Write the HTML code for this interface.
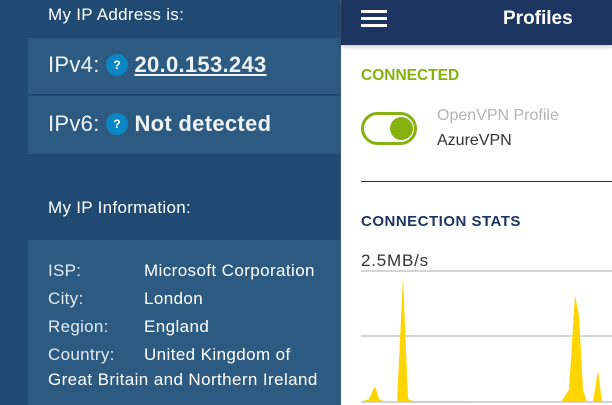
<!DOCTYPE html>
<html><head><style>
body{margin:0;width:612px;height:405px;overflow:hidden;position:relative;background:#214a73;font-family:"Liberation Sans",sans-serif;}
.l{position:absolute;color:#fff;}
.p{position:absolute;left:28px;width:320px;background:#2d5a80;}
.q{display:inline-block;width:22px;height:22px;border-radius:50%;background:#0a86c4;color:#fff;font-size:12px;text-align:center;line-height:22px;font-weight:bold;vertical-align:3px;letter-spacing:0;}
.k{position:absolute;left:48px;color:#e2ecf4;font-size:17px;letter-spacing:.3px;}
.v{position:absolute;left:144px;color:#fff;font-size:17px;letter-spacing:.4px;}
</style></head><body>
<div class="l" style="left:48px;top:5px;font-size:17px;letter-spacing:.3px;">My IP Address is:</div>
<div class="p" style="top:38px;height:56px;"></div>
<div class="p" style="top:96px;height:58px;"></div>
<div class="l" style="left:48px;top:52px;font-size:22px;color:#eef3f8;letter-spacing:.3px">IPv4: <span class="q">?</span> <b style="text-decoration:underline;">20.0.153.243</b></div>
<div class="l" style="left:48px;top:111px;font-size:22px;color:#eef3f8;letter-spacing:.3px">IPv6: <span class="q">?</span> <b>Not detected</b></div>
<div class="l" style="left:48px;top:198px;font-size:17px;letter-spacing:.3px;">My IP Information:</div>
<div class="p" style="top:240px;height:165px;"></div>
<div class="k" style="top:261px">ISP:</div><div class="v" style="top:261px">Microsoft Corporation</div>
<div class="k" style="top:289px">City:</div><div class="v" style="top:289px">London</div>
<div class="k" style="top:317px">Region:</div><div class="v" style="top:317px">England</div>
<div class="k" style="top:345px">Country:</div><div class="v" style="top:345px">United Kingdom of</div>
<div class="l" style="left:48px;top:370px;font-size:17px;letter-spacing:.4px;">Great Britain and Northern Ireland</div>

<div style="position:absolute;left:340px;top:0;width:272px;height:405px;background:#fff;border-left:1px solid #3a5a7a;"></div>
<div style="position:absolute;left:341px;top:0;width:271px;height:45px;background:#1c3661;box-shadow:0 2px 4px rgba(0,0,0,.2);"></div>
<div style="position:absolute;left:361px;top:10px;width:26px;height:3px;background:#fff;"></div>
<div style="position:absolute;left:361px;top:17px;width:26px;height:3px;background:#fff;"></div>
<div style="position:absolute;left:361px;top:24px;width:26px;height:3px;background:#fff;"></div>
<div class="l" style="left:503px;top:8px;font-size:19px;font-weight:bold;">Profiles</div>
<div class="l" style="left:361px;top:67px;font-size:15.5px;font-weight:bold;color:#86b10f;">CONNECTED</div>
<div style="position:absolute;left:361px;top:112px;width:56px;height:33px;border:3px solid #86b10f;border-radius:17px;box-sizing:border-box;"></div>
<div style="position:absolute;left:390px;top:117px;width:23px;height:23px;border-radius:50%;background:#86b10f;"></div>
<div class="l" style="left:437px;top:107px;font-size:16px;color:#b4b4b4;">OpenVPN Profile</div>
<div class="l" style="left:437px;top:132px;font-size:16px;color:#333;">AzureVPN</div>
<div style="position:absolute;left:361px;top:181px;width:251px;height:1px;background:#1c3661;"></div>
<div class="l" style="left:361px;top:213px;font-size:15px;font-weight:bold;color:#1c3661;letter-spacing:.5px;">CONNECTION STATS</div>
<div class="l" style="left:361px;top:251px;font-size:17px;color:#333;letter-spacing:.8px;">2.5MB/s</div>
<svg style="position:absolute;left:361px;top:265px" width="251" height="140">
<line x1="0" y1="6" x2="251" y2="6" stroke="#d4d4d4" stroke-width="2"/>
<line x1="0" y1="71" x2="251" y2="71" stroke="#d4d4d4" stroke-width="2"/>
<line x1="0" y1="137" x2="251" y2="137" stroke="#d4d4d4" stroke-width="2"/>
<path d="M0,137 L8,134 L14,121 L18,134 L24,137 L36,137 L42,12 L47,134 L52,136 L100,136 L110,137 L200,137 L208,125 L214,30 L218,50 L222,125 L226,137 L232,137 L237,105 L241,137 L251,137 Z" fill="#ffd500"/>
</svg>
</body></html>
